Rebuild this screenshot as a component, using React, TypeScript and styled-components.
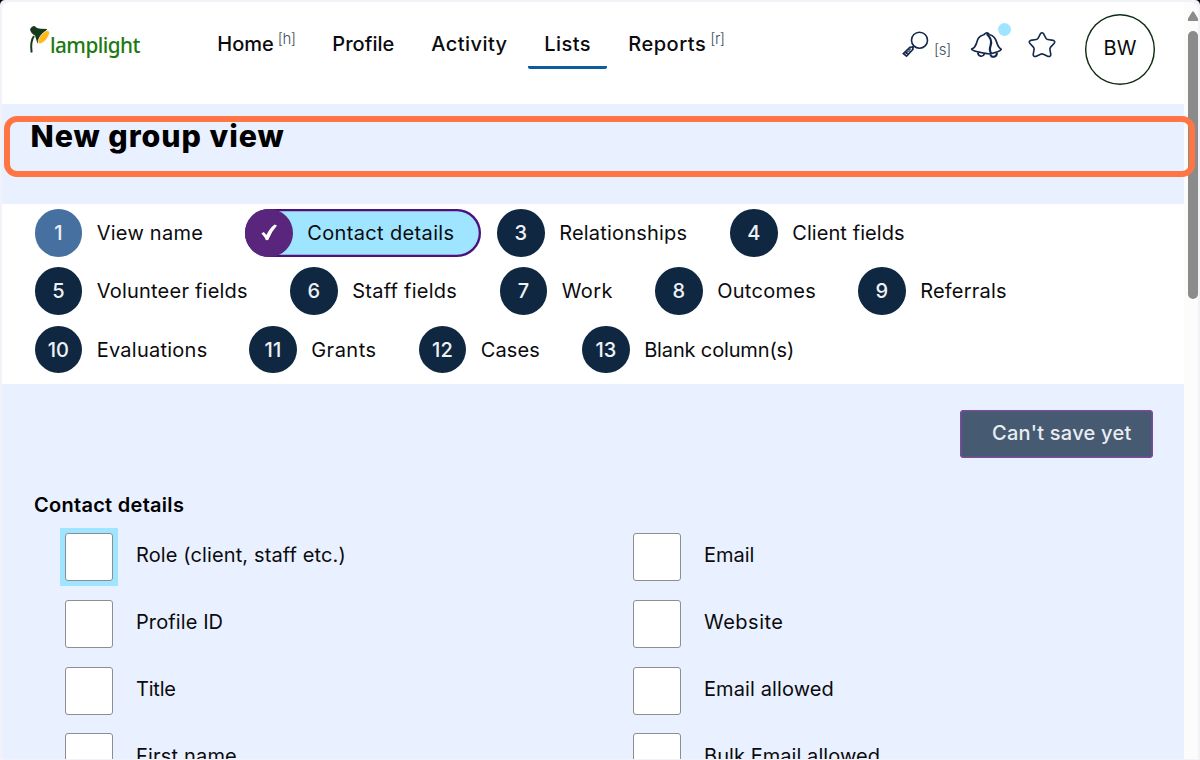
import React from "react";
import styled, { createGlobalStyle } from "styled-components";

const Global = createGlobalStyle`
  *, *::before, *::after { box-sizing: border-box; }
  html, body { margin: 0; padding: 0; background: #000; overflow: hidden; }
  body { font-family: Inter, "Liberation Sans", sans-serif; color: #0b0b0e; }
  svg { display: block; flex: none; }
`;

const Frame = styled.div`
  position: relative;
  width: 1200px;
  height: 760px;
  padding: 2px 2px 1px 2px;
  background: #f3f2f8;
  border-radius: 5px 5px 0 0;
  overflow: hidden;
`;

const Viewport = styled.div`
  display: flex;
  height: 757px;
  background: #e9f0ff;
  border-radius: 8px 8px 0 0;
  overflow: hidden;
`;

const Page = styled.div`
  width: 1182px;
  height: 757px;
  overflow: hidden;
`;

const Header = styled.header`
  display: flex;
  height: 102px;
  background: #fff;
  padding-left: 27px;
`;

const Brand = styled.div`
  display: flex;
  width: 172px;
  padding-top: 23px;
`;

const BrandName = styled.span`
  padding-top: 4.5px;
  font-family: "Noto Sans", sans-serif;
  font-size: 22.5px;
  font-weight: 500;
  line-height: 30px;
  letter-spacing: -0.6px;
  color: #1c7a12;
  transform: scaleX(0.92);
  transform-origin: left center;
`;

const Nav = styled.nav`
  display: flex;
  align-items: flex-start;
  padding-top: 20px;
`;

const NavItem = styled.a<{ $w: number; $active?: boolean; $ls?: number; $after?: number }>`
  display: flex;
  width: ${(p) => p.$w}px;
  height: 47px;
  margin-right: ${(p) => p.$after ?? 0}px;
  padding-left: 16.3px;
  border-bottom: 3px solid ${(p) => (p.$active ? "#0c5c9e" : "transparent")};
  border-radius: 2px;
  font-size: 20px;
  line-height: 44px;
  font-weight: 500;
  letter-spacing: ${(p) => p.$ls ?? 0}px;
  white-space: nowrap;
`;

const Key = styled.span<{ $top: number }>`
  width: 16px;
  font-size: 15px;
  font-weight: 300;
  line-height: 20px;
  letter-spacing: -0.5px;
  color: #3f5060;
  padding-top: ${(p) => p.$top}px;
  margin-left: 4px;
`;

const Tools = styled.div`
  display: flex;
  margin-left: auto;
  padding-right: 29px;
`;

const ToolIcon = styled.div<{ $left: number }>`
  position: relative;
  display: flex;
  align-items: flex-start;
  padding-top: 29px;
  margin-left: ${(p) => p.$left}px;
`;

const Dot = styled.span`
  position: absolute;
  top: 20.5px;
  right: -9.3px;
  width: 13.6px;
  height: 13.6px;
  border-radius: 50%;
  background: #9fe5ff;
`;

const Avatar = styled.div`
  display: flex;
  align-items: center;
  justify-content: center;
  width: 70px;
  height: 70.5px;
  margin: 12px 0 0 29px;
  padding-bottom: 3px;
  border-radius: 50%;
  box-shadow: inset 0 0 0 1.4px #0d2a10;
  font-size: 20px;
  font-weight: 370;
`;

const TitleBand = styled.div`
  height: 99.5px;
  padding: 14.3px 0 0 28.5px;
`;

const Title = styled.h1`
  margin: 0;
  font-size: 30.4px;
  line-height: 37px;
  font-weight: 780;
  letter-spacing: 0.95px;
  color: #000;
`;

const Steps = styled.div`
  display: flex;
  flex-direction: column;
  gap: 10.8px;
  height: 180.5px;
  padding: 5.5px 0 0 32.6px;
  background: #fff;
`;

const StepRow = styled.div`
  display: flex;
  gap: 16px;
`;

const StepItem = styled.div<{ $w: number; $active?: boolean }>`
  display: flex;
  align-items: center;
  width: ${(p) => p.$w}px;
  height: 47.6px;
  border-radius: 24px;
  background: ${(p) => (p.$active ? "#9fe5ff" : "transparent")};
  box-shadow: ${(p) => (p.$active ? "inset 0 0 0 2.3px #4f0f7c" : "none")};
`;

const Bullet = styled.span<{ $tone: string }>`
  display: flex;
  align-items: center;
  justify-content: center;
  flex: none;
  width: 47.6px;
  height: 47.6px;
  border-radius: 50%;
  background: ${(p) => p.$tone};
  color: #eef1f5;
  font-size: 20px;
  font-weight: 500;
`;

const Text = styled.span<{ $ls?: number }>`
  font-size: 20px;
  font-weight: 370;
  line-height: 28px;
  letter-spacing: ${(p) => p.$ls ?? 0}px;
  white-space: nowrap;
`;

const StepText = styled(Text)`
  margin-left: 14.5px;
`;

const Main = styled.main`
  padding: 26px 30.8px 0 32px;
`;

const SaveButton = styled.button`
  display: block;
  width: 193.2px;
  height: 48px;
  margin: 0 0 0 auto;
  padding: 0 0 2px 32px;
  border: 0;
  box-shadow: inset 0 0 0 1.6px #7a4a9c;
  border-radius: 4px;
  background: #465a71;
  color: #e9edf2;
  font: 500 20px/46px Inter, sans-serif;
  letter-spacing: 0.25px;
  text-align: left;
  white-space: nowrap;
`;

const SectionTitle = styled.h2`
  margin: 33px 0 14px;
  font-size: 20px;
  line-height: 28px;
  font-weight: 600;
  letter-spacing: 0.28px;
  color: #000;
`;

const Columns = styled.div`
  display: grid;
  grid-template-columns: 568px 500px;
  grid-auto-rows: 48px;
  row-gap: 18.8px;
  padding-left: 31px;
`;

const Option = styled.label`
  display: flex;
  gap: 23px;
`;

const FocusRing = styled.span<{ $focus?: boolean }>`
  display: flex;
  width: 48px;
  height: 48px;
  background: ${(p) => (p.$focus ? "#9fe5ff" : "transparent")};
  box-shadow: ${(p) => (p.$focus ? "0 0 0 5px #9fe5ff" : "none")};
`;

const Box = styled.span`
  width: 48px;
  height: 48px;
  border: 1px solid #8e8e92;
  border-radius: 3px;
  background: #fff;
`;

const OptionText = styled(Text)`
  padding-top: 8.4px;
`;

const Scrollbar = styled.div`
  width: 14px;
  height: 757px;
  padding: 9px 0 0 4px;
  background: #fcfcfc;
`;

const Thumb = styled.div`
  width: 10px;
  height: 268px;
  margin-top: 10px;
  border-radius: 5px;
  background: #8b8b8b;
`;

const Highlight = styled.div`
  position: absolute;
  left: 4px;
  top: 116px;
  width: 1191px;
  height: 61px;
  border: 6px solid #ff7543;
  border-radius: 13px;
`;

const navy = "#0f2740";
type Step = { n: string; label: string; w: number; ls?: number; tone?: string; active?: boolean };
const rows: Step[][] = [
  [
    { n: "1", label: "View name", w: 194.5, ls: 0.25, tone: "#4670a0" },
    { n: "✓", label: "Contact details", w: 236, ls: 0.36, tone: "#5a267d", active: true },
    { n: "3", label: "Relationships", w: 217, ls: 0.2 },
    { n: "4", label: "Client fields", w: 200, ls: 0.08 },
  ],
  [
    { n: "5", label: "Volunteer fields", w: 239.5, ls: 0.22 },
    { n: "6", label: "Staff fields", w: 193.5, ls: 0.25 },
    { n: "7", label: "Work", w: 139.5, ls: 0.4 },
    { n: "8", label: "Outcomes", w: 187, ls: 0.28 },
    { n: "9", label: "Referrals", w: 180, ls: 0.2 },
  ],
  [
    { n: "10", label: "Evaluations", w: 198.5, ls: 0.25 },
    { n: "11", label: "Grants", w: 153.5, ls: 0.5 },
    { n: "12", label: "Cases", w: 147.5, ls: 0.1 },
    { n: "13", label: "Blank column(s)", w: 240, ls: -0.15 },
  ],
];

const options: { label: string; ls?: number; focus?: boolean }[] = [
  { label: "Role (client, staff etc.)", ls: 0.12, focus: true },
  { label: "Email", ls: 0 },
  { label: "Profile ID", ls: 0.1 },
  { label: "Website", ls: 0.5 },
  { label: "Title", ls: -0.2 },
  { label: "Email allowed", ls: 0.1 },
  { label: "First name", ls: 0.18 },
  { label: "Bulk Email allowed", ls: 0.06 },
];

const Check = () => (
  <svg width="18" height="20" viewBox="0 0 18 20" fill="none">
    <path d="M1.4 10.6 L3.8 9 L6.5 12 Q9.3 5.4 14.6 1.4 L17 2.4 Q11.4 8.6 8.2 17 L6 17.2 Q4.2 13.4 1.4 10.6 Z" fill="#fff" />
  </svg>
);

const LampIcon = () => (
  <svg width="21" height="30" viewBox="0 0 21 30">
    <path d="M2.6 27.5 C1.6 20 2.4 14.5 5 11" fill="none" stroke="#173a1c" strokeWidth="2" />
    <path d="M1 4.6 Q2.4 1.2 5.4 1 Q8 4 12 3.8 L18.2 4 L8.4 18.4 Q7 13.6 6 10.4 Q2.4 9.4 1 4.6 Z" fill="#173a1c" />
    <ellipse cx="14.8" cy="12.2" rx="8" ry="3.4" transform="rotate(-51 14.8 12.2)" fill="#ffb91a" stroke="#fff" strokeWidth="0.6" />
  </svg>
);

const SearchIcon = () => (
  <svg width="28" height="30" viewBox="0 0 28 30" fill="none" stroke="#14284b" strokeWidth="1.6">
    <circle cx="17.5" cy="9.2" r="8" />
    <path d="M12 15 L10.3 16.7" strokeWidth="2" />
    <path d="M1.4 22.6 L8 16.2 Q10.8 15.4 11 18.3 L4.6 25.2 Z" strokeWidth="1.7" />
    <path d="M3.6 22.8 L8.8 17.6 M3.4 20.8 L6.2 23.4 M6 18.4 L8.8 20.8" strokeWidth="1.1" />
  </svg>
);

const BellIcon = () => (
  <svg width="32" height="28" viewBox="0 0 32 28" fill="none" stroke="#14284b" strokeWidth="1.7" strokeLinejoin="round">
    <path d="M13.2 4 C8.4 5.4 7.6 8.6 6.4 12.4 C5.2 16 3.8 17.2 1.6 18 C1.8 20 10 21.4 19.6 23 C25 21.8 30.6 20.4 31.2 18.2 C28.4 16.8 27.6 14.6 26.6 11 C25.4 7 23.8 4.8 19.8 3.8" />
    <path d="M13.2 4 C14.4 3.6 15 1.8 16.8 1.8 C18.4 1.8 18.6 3.4 19.8 3.8" />
    <path d="M16.8 3 C21.2 7 22.2 10 20.6 14.6 C19.4 18 19.4 20 21.2 22.6" strokeWidth="2.2" />
    <path d="M7.8 21.6 C8.4 25.8 12.8 26.6 14.4 22.8" />
    <path d="M20.4 23.4 C21.4 27 26.8 26.4 27 21.6" strokeWidth="2" />
  </svg>
);

const StarIcon = () => (
  <svg width="28" height="28" viewBox="0 0 28 28" fill="none" stroke="#14284b" strokeWidth="1.6" strokeLinejoin="round">
    <path d="M12.4 2.8 Q14 0.8 15.6 2.8 L18 7.4 Q18.6 8.3 19.8 8.5 L25.4 9.4 Q27.6 10.2 26.2 12.2 L22.4 16.4 Q21.7 17.3 21.9 18.4 L22.8 23.4 Q22.7 25.9 20.2 25.4 L15.4 23.2 Q14 22.6 12.6 23.2 L7.8 25.4 Q5.3 25.9 5.2 23.4 L6.1 18.4 Q6.3 17.3 5.6 16.4 L1.8 12.2 Q0.4 10.2 2.6 9.4 L8.2 8.5 Q9.4 8.3 10 7.4 Z" />
  </svg>
);

export default function App() {
  return (
    <>
      <Global />
      <Frame>
        <Viewport>
          <Page>
            <Header>
              <Brand>
                <LampIcon />
                <BrandName>lamplight</BrandName>
              </Brand>
              <Nav>
                <NavItem $w={115}>Home<Key $top={6.5}>[h]</Key></NavItem>
                <NavItem $w={99} $ls={0.05}>Profile</NavItem>
                <NavItem $w={113} $ls={0.45}>Activity</NavItem>
                <NavItem $w={79} $after={5} $active $ls={0.45}>Lists</NavItem>
                <NavItem $w={118} $ls={0.5}>Reports<Key $top={6.5}>[r]</Key></NavItem>
              </Nav>
              <Tools>
                <ToolIcon $left={0}>
                  <SearchIcon />
                  <Key $top={8.5}>[s]</Key>
                </ToolIcon>
                <ToolIcon $left={20}>
                  <BellIcon />
                  <Dot />
                </ToolIcon>
                <ToolIcon $left={26}>
                  <StarIcon />
                </ToolIcon>
                <Avatar>BW</Avatar>
              </Tools>
            </Header>
            <TitleBand>
              <Title>New group view</Title>
            </TitleBand>
            <Steps>
              {rows.map((row, i) => (
                <StepRow key={i}>
                  {row.map((s) => (
                    <StepItem key={s.n} $w={s.w} $active={s.active}>
                      <Bullet $tone={s.tone ?? navy}>{s.active ? <Check /> : s.n}</Bullet>
                      <StepText $ls={s.ls}>{s.label}</StepText>
                    </StepItem>
                  ))}
                </StepRow>
              ))}
            </Steps>
            <Main>
              <SaveButton>Can't save yet</SaveButton>
              <SectionTitle>Contact details</SectionTitle>
              <Columns>
                {options.map((o) => (
                  <Option key={o.label}>
                    <FocusRing $focus={o.focus}><Box /></FocusRing>
                    <OptionText $ls={o.ls}>{o.label}</OptionText>
                  </Option>
                ))}
              </Columns>
            </Main>
          </Page>
          <Scrollbar>
            <svg width="10" height="10" viewBox="0 0 10 10"><path d="M4 1 Q5 -0.4 6 1 L10 7.6 V10 H0 V7.6 Z" fill="#8b8b8b" /></svg>
            <Thumb />
          </Scrollbar>
        </Viewport>
        <Highlight />
      </Frame>
    </>
  );
}
